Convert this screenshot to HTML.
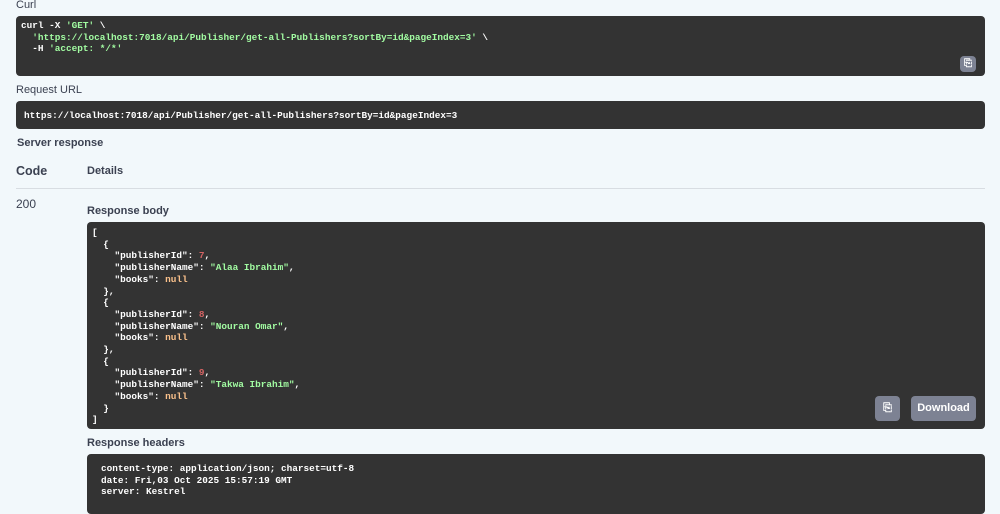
<!DOCTYPE html>
<html><head><style>
body{margin:0;width:1000px;height:502px;background:#f2f8fb;font-family:"Liberation Sans",sans-serif;position:relative;overflow:hidden;color:#3b4151}
.lbl{position:absolute;font-size:11px;font-weight:bold;color:#3b4151}
.box{position:absolute;background:#333;border-radius:4px;font-family:"Liberation Mono",monospace;font-weight:bold;font-size:9.4px;color:#fff;white-space:pre;line-height:11.7px}
.g{color:#a2fca2}.n{color:#d36363}.o{color:#fcc28c}
.btn{position:absolute;background:#7d8293;border-radius:4px;color:#fff;font-size:11px;font-weight:bold;text-align:center}
</style></head><body>
<div class="lbl" style="left:16px;top:-1px;font-weight:normal">Curl</div>
<div class="box" style="left:16px;top:16px;width:969px;height:60px;padding:0;"><div style="position:absolute;left:5px;top:4px">curl -X <span class="g">'GET'</span> \
  <span class="g">'https://localhost:7018/api/Publisher/get-all-Publishers?sortBy=id&amp;pageIndex=3'</span> \
  -H <span class="g">'accept: */*'</span></div></div>
<div class="btn" style="left:960px;top:56px;width:16px;height:16px;font-size:10px;line-height:16px">⎘</div>
<div class="lbl" style="left:16px;top:84px;font-weight:normal">Request URL</div>
<div class="box" style="left:16px;top:101px;width:969px;height:28px"><div style="position:absolute;left:8px;top:9px">https://localhost:7018/api/Publisher/get-all-Publishers?sortBy=id&amp;pageIndex=3</div></div>
<div class="lbl" style="left:17px;top:137px">Server response</div>
<div class="lbl" style="left:16px;top:164px;font-size:12.5px">Code</div>
<div class="lbl" style="left:87px;top:165px">Details</div>
<div style="position:absolute;left:16px;top:188px;width:969px;height:1px;background:#d8dde2"></div>
<div class="lbl" style="left:16px;top:197px;font-weight:normal;font-size:12px">200</div>
<div class="lbl" style="left:87px;top:205px">Response body</div>
<div class="box" style="left:87px;top:222px;width:898px;height:207px"><div style="position:absolute;left:5px;top:5px">[
  {
    "publisherId": <span class="n">7</span>,
    "publisherName": <span class="g">"Alaa Ibrahim"</span>,
    "books": <span class="o">null</span>
  },
  {
    "publisherId": <span class="n">8</span>,
    "publisherName": <span class="g">"Nouran Omar"</span>,
    "books": <span class="o">null</span>
  },
  {
    "publisherId": <span class="n">9</span>,
    "publisherName": <span class="g">"Takwa Ibrahim"</span>,
    "books": <span class="o">null</span>
  }
]</div></div>
<div class="btn" style="left:875px;top:396px;width:25px;height:25px;line-height:25px">⎘</div>
<div class="btn" style="left:911px;top:396px;width:65px;height:25px;line-height:25px">Download</div>
<div class="lbl" style="left:87px;top:437px">Response headers</div>
<div class="box" style="left:87px;top:454px;width:898px;height:60px"><div style="position:absolute;left:14px;top:9px">content-type: application/json; charset=utf-8
date: Fri,03 Oct 2025 15:57:19 GMT
server: Kestrel</div></div>
</body></html>
